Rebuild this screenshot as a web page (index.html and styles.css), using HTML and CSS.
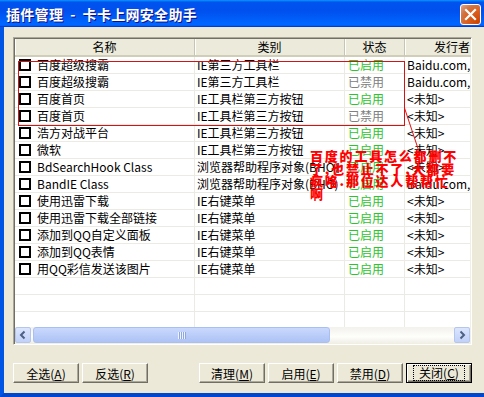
FILE: index.html
```html
<!DOCTYPE html>
<html>
<head>
    <meta http-equiv="Content-Type" content="text/html; charset=utf-8" />
    <title>插件管理</title>
    <link rel="stylesheet" href="styles.css">
</head>
<body>
<div class="window">
    <div class="titlebar">
        <span class="title">插件管理 &nbsp;- &nbsp;卡卡上网安全助手</span>
        <span class="close">
            <svg width="21" height="21" viewBox="0 0 21 21"><path d="M6 6 L15 15 M15 6 L6 15" stroke="#fff" stroke-width="2.2" stroke-linecap="square"/></svg>
        </span>
    </div>
    <div class="frame">
        <div class="list">
            <div class="head">
                <div class="hcell">名称</div>
                <div class="hcell">类别</div>
                <div class="hcell">状态</div>
                <div class="hcell">发行者</div>
            </div>
            <div class="rows">
                <div class="row"><div class="cell name"><span class="chk"></span>百度超级搜霸</div><div class="cell">IE第三方工具栏</div><div class="cell on">已启用</div><div class="cell">Baidu.com,</div></div>
                <div class="row"><div class="cell name"><span class="chk"></span>百度超级搜霸</div><div class="cell">IE第三方工具栏</div><div class="cell off">已禁用</div><div class="cell">Baidu.com,</div></div>
                <div class="row"><div class="cell name"><span class="chk"></span>百度首页</div><div class="cell">IE工具栏第三方按钮</div><div class="cell on">已启用</div><div class="cell">&lt;未知&gt;</div></div>
                <div class="row"><div class="cell name"><span class="chk"></span>百度首页</div><div class="cell">IE工具栏第三方按钮</div><div class="cell off">已禁用</div><div class="cell">&lt;未知&gt;</div></div>
                <div class="row"><div class="cell name"><span class="chk"></span>浩方对战平台</div><div class="cell">IE工具栏第三方按钮</div><div class="cell on">已启用</div><div class="cell">&lt;未知&gt;</div></div>
                <div class="row"><div class="cell name"><span class="chk"></span>微软</div><div class="cell">IE工具栏第三方按钮</div><div class="cell on">已启用</div><div class="cell">&lt;未知&gt;</div></div>
                <div class="row"><div class="cell name"><span class="chk"></span>BdSearchHook Class</div><div class="cell">浏览器帮助程序对象(BHO)</div><div class="cell on">已启用</div><div class="cell">&lt;未知&gt;</div></div>
                <div class="row"><div class="cell name"><span class="chk"></span>BandIE Class</div><div class="cell">浏览器帮助程序对象(BHO)</div><div class="cell on">已启用</div><div class="cell">Baidu.com,</div></div>
                <div class="row"><div class="cell name"><span class="chk"></span>使用迅雷下载</div><div class="cell">IE右键菜单</div><div class="cell on">已启用</div><div class="cell">&lt;未知&gt;</div></div>
                <div class="row"><div class="cell name"><span class="chk"></span>使用迅雷下载全部链接</div><div class="cell">IE右键菜单</div><div class="cell on">已启用</div><div class="cell">&lt;未知&gt;</div></div>
                <div class="row"><div class="cell name"><span class="chk"></span>添加到QQ自定义面板</div><div class="cell">IE右键菜单</div><div class="cell on">已启用</div><div class="cell">&lt;未知&gt;</div></div>
                <div class="row"><div class="cell name"><span class="chk"></span>添加到QQ表情</div><div class="cell">IE右键菜单</div><div class="cell on">已启用</div><div class="cell">&lt;未知&gt;</div></div>
                <div class="row"><div class="cell name"><span class="chk"></span>用QQ彩信发送该图片</div><div class="cell">IE右键菜单</div><div class="cell on">已启用</div><div class="cell">&lt;未知&gt;</div></div>
                <div class="row"><div class="cell"></div><div class="cell"></div><div class="cell"></div><div class="cell"></div></div>
                <div class="row"><div class="cell"></div><div class="cell"></div><div class="cell"></div><div class="cell"></div></div>
                <div class="row"><div class="cell"></div><div class="cell"></div><div class="cell"></div><div class="cell"></div></div>
            </div>
            <div class="hscroll">
                <span class="arrow"><svg width="16" height="16" viewBox="0 0 16 16"><path d="M9.5 4.5 L6 8 L9.5 11.5" fill="none" stroke="#4d6185" stroke-width="2"/></svg></span>
                <span class="thumb"><span class="grip"></span></span>
                <span class="track"></span>
                <span class="arrow"><svg width="16" height="16" viewBox="0 0 16 16"><path d="M6.5 4.5 L10 8 L6.5 11.5" fill="none" stroke="#4d6185" stroke-width="2"/></svg></span>
            </div>
        </div>
        <div class="actions">
            <div class="group">
                <span class="btn">全选(<u>A</u>)</span>
                <span class="btn">反选(<u>R</u>)</span>
            </div>
            <div class="group">
                <span class="btn">清理(<u>M</u>)</span>
                <span class="btn">启用(<u>E</u>)</span>
                <span class="btn">禁用(<u>D</u>)</span>
                <span class="btn default"><span class="focus">关闭(<u>C</u>)</span></span>
            </div>
        </div>
    </div>

    <!-- 截图上手画的红框和留言 -->
    <svg class="marks" width="484" height="397">
        <rect x="18.5" y="61.5" width="386" height="64" fill="none" stroke="#d41414" stroke-width="1"/>
        <path d="M404.5 108 L418.5 150" stroke="#e01010" stroke-width="1"/>
    </svg>
    <div class="note">百度的工具怎么都删不<br>了,也禁止不了,大都要<br>疯咯.那位达人帮帮忙<br>啊</div>
</div>
</body>
</html>
```

FILE: styles.css
```css
*{ margin: 0; padding: 0; box-sizing: border-box;}
body{ font-family: "Noto Sans CJK SC", "Liberation Sans", sans-serif; font-size: 12px; color: #000; background: #ece9d8;}

.window{ position: relative; width: 484px; height: 397px; display: flex; flex-direction: column; overflow: hidden;}

.titlebar{ height: 27px; display: flex; align-items: center; justify-content: space-between; padding: 0 3px 0 6px;
    background: linear-gradient(180deg, #0997ff, #0053ee 8%, #0050ee 40%, #0066ff 88%, #0066ff 93%, #005bff 95%, #003dd7 96%, #003dd7);}
.title{ color: #fff; font-size: 14px; font-weight: bold; line-height: 18px; letter-spacing: 0.3px; text-shadow: 1px 1px #0f1089; white-space: nowrap;}
.close{ width: 21px; height: 21px; margin-top: 2px; border: 1px solid #fff; border-radius: 3px; display: flex;
    background: radial-gradient(circle at 90% 90%, #cc4600 0%, #dc6527 55%, #cd7546 70%, #e5a68a 100%);}
.close svg{ margin: -1px;}

.frame{ flex: 1; display: flex; flex-direction: column; padding: 10px 12px 0 9px; border-left: 4px solid #0055e5; border-bottom: 4px solid #0046cf; background: #ece9d8;}

.list{ width: 459px; height: 308px; display: flex; flex-direction: column; overflow: hidden; background: #fff;
    border: 1px solid; border-color: #aca899 #fff #fff #aca899; box-shadow: inset 1px 1px #716f64, inset -1px -1px #f1efe2; padding: 1px;}

.head{ display: grid; grid-template-columns: 180px 150px 60px 100px; height: 18px; flex: none;}
.hcell{ text-align: center; line-height: 16px; background: #ebeadb; border-right: 1px solid #c7c5b2; border-bottom: 2px solid #d0cdb9; box-shadow: inset 1px 0 #fff; white-space: nowrap; overflow: hidden;}
.hcell:last-child{ text-align: right; padding-right: 34px;}

.rows{ flex: 1; overflow: hidden;}
.row{ display: grid; grid-template-columns: 180px 150px 60px 100px; height: 17px;}
.cell{ height: 17px; line-height: 16px; padding-left: 2px; border-right: 1px solid #ebeae3; border-bottom: 1px solid #ebeae3; white-space: nowrap; overflow: hidden;}
.cell.name{ display: flex; align-items: center; padding-left: 4px;}
.cell.on{ color: #2dc42d; padding-left: 3px;}
.cell.off{ color: #808080; padding-left: 3px;}
.chk{ width: 12px; height: 12px; border: 2px solid #000; background: #fff; margin-right: 6px; flex: none;}

.hscroll{ height: 16px; flex: none; display: flex; background: linear-gradient(180deg, #f3f1ec, #fefefb 60%, #f0efe8);}
.arrow{ width: 16px; height: 16px; border: 1px solid #b5c6ee; border-radius: 2px; background: linear-gradient(180deg, #dbe5fd, #c0d0f8); display: flex;}
.arrow svg{ margin: -1px;}
.thumb{ width: 297px; margin-left: 2px; border: 1px solid #a9bff3; border-radius: 3px; background: linear-gradient(180deg, #cad9fd, #b8cbf8 60%, #aec3f4); display: flex; align-items: center; justify-content: center;}
.grip{ width: 8px; height: 7px; background: repeating-linear-gradient(90deg, #eef3fe 0 1px, #8ca7e3 1px 2px);}
.track{ flex: 1;}

.actions{ margin-top: 18px; width: 459px; display: flex; justify-content: space-between;}
.group{ display: flex; gap: 3px;}
.btn{ width: 66px; height: 20px; display: flex; align-items: center; justify-content: center; background: #ece9d8; white-space: nowrap;
    border: 1px solid; border-color: #fff #716f64 #716f64 #fff; box-shadow: inset -1px -1px #aca899;}
.btn u{ text-decoration: underline;}
.btn.default{ border: 1px solid #000; box-shadow: inset 1px 1px #fff, inset -1px -1px #716f64, inset -2px -2px #aca899;}
.focus{ border: 1px dotted #000; padding: 0 5px; line-height: 14px;}

.marks{ position: absolute; left: 0; top: 0; pointer-events: none;}
.note{ position: absolute; left: 310px; top: 150px; color: #ff0000; font-size: 13px; font-weight: 900; line-height: 12.7px; letter-spacing: 1.8px; white-space: nowrap;}
```
